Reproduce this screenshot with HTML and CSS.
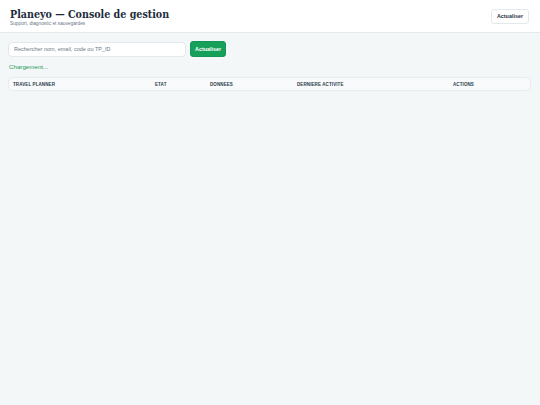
FILE: index.html
```html
<!DOCTYPE html>
<html lang="fr">
<head>
<meta charset="utf-8">
<title>Planeyo — Console de gestion</title>
<link rel="stylesheet" href="styles.css">
</head>
<body>
<header class="topbar">
  <div class="brand">
    <h1 class="title">Planeyo — Console de gestion</h1>
    <div class="subtitle">Support, diagnostic et sauvegardes</div>
  </div>
  <button class="btn btn-light">Actualiser</button>
</header>
<main class="content">
  <div class="searchrow">
    <input class="search" type="text" placeholder="Rechercher nom, email, code ou TP_ID">
    <button class="btn btn-green">Actualiser</button>
  </div>
  <div class="status">Chargement...</div>
  <div class="table">
    <div class="thead">
      <div class="th c1">Travel planner</div>
      <div class="th c2">Etat</div>
      <div class="th c3">Donnees</div>
      <div class="th c4">Derniere activite</div>
      <div class="th c5">Actions</div>
    </div>
  </div>
</main>
</body>
</html>
```
FILE: styles.css
```css
* { box-sizing: border-box; }
html, body { margin: 0; padding: 0; }
body {
  background: #f3f7f7;
  font-family: "Liberation Sans", Arial, sans-serif;
  color: #1f2d3d;
  width: 540px;
  height: 405px;
}
.topbar {
  height: 33px;
  background: #ffffff;
  border-bottom: 1px solid #e3e9ec;
  display: flex;
  align-items: center;
  justify-content: space-between;
  padding: 0 11px 0 10px;
}
.brand { display: flex; flex-direction: column; padding-top: 2px; }
.title {
  margin: 0;
  font-family: "DejaVu Serif Condensed", "DejaVu Serif", serif;
  font-stretch: condensed;
  font-weight: bold;
  font-size: 10.6px;
  line-height: 13px;
  color: #1c2b3c;
}
.subtitle {
  font-size: 4.8px;
  line-height: 6px;
  color: #6b7785;
}
.btn {
  font-family: "Liberation Sans", Arial, sans-serif;
  font-weight: bold;
  font-size: 5.4px;
  border-radius: 3px;
  cursor: pointer;
}
.btn-light {
  height: 15px;
  padding: 0 5px;
  background: #ffffff;
  border: 1px solid #e3e8ec;
  color: #2a3646;
}
.btn-green {
  height: 16px;
  padding: 0 4px;
  background: #16a05a;
  border: 1px solid #14955a;
  color: #ffffff;
}
.content { padding: 8px 9px 0 8px; }
.searchrow { display: flex; gap: 4px; align-items: center; }
.search {
  width: 178px;
  height: 15px;
  border: 1px solid #e3e8ec;
  border-radius: 4px;
  background: #ffffff;
  font-family: "Liberation Sans", Arial, sans-serif;
  font-size: 5.5px;
  padding: 0 5px;
  outline: none;
}
.search::placeholder { color: #6e7884; }
.status {
  margin-top: 5px;
  font-size: 6.2px;
  line-height: 9px;
  color: #1f9c5a;
  padding-left: 1px;
}
.table {
  margin-top: 6px;
  border: 1px solid #e6ecef;
  border-radius: 5px;
  background: #f8fafb;
}
.thead {
  display: flex;
  height: 12px;
  align-items: center;
  padding-left: 4px;
}
.th {
  font-size: 4.5px;
  font-weight: bold;
  text-transform: uppercase;
  letter-spacing: 0.1px;
  color: #2c3a4a;
}
.c1 { width: 142px; }
.c2 { width: 55px; }
.c3 { width: 87px; }
.c4 { width: 156px; }
.c5 { flex: 1; }
```
